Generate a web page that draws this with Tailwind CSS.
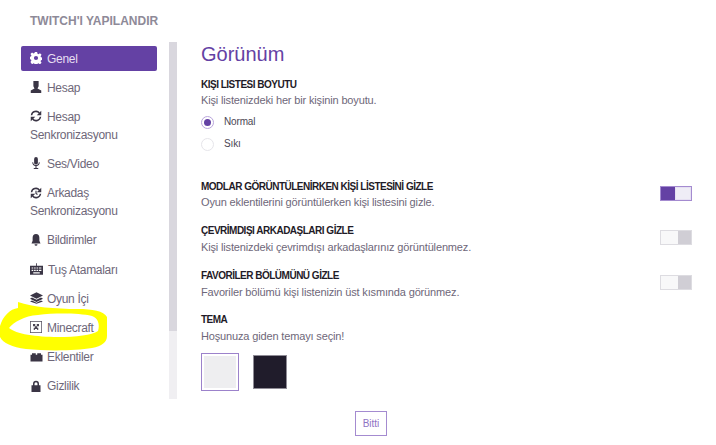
<!DOCTYPE html>
<html lang="tr">
<head>
    <meta charset="UTF-8">
    <title>Twitch'i Yapılandır</title>
    <script src="https://cdn.jsdelivr.net/npm/@tailwindcss/browser@4"></script>
</head>
<body class="bg-white">
    <div class="relative w-[716px] h-[445px] overflow-hidden bg-white font-['Liberation_Sans',Arial,sans-serif] text-[#6e6779]">
        <h1 class="pl-[30px] pt-[15px] h-[42px] text-[12px] leading-[13px] font-bold text-[#8e8a98]">TWITCH'I YAPILANDIR</h1>

        <div class="flex h-[357px]">
            <!-- sidebar -->
            <div class="w-[169px] h-[357px] overflow-hidden pl-[21px] pr-[12px] pt-[4px] tracking-[-0.3px]">
                <a class="block mb-[4.2px] pl-[9px] py-[3.5px] text-[12px] leading-[18px] rounded-[2px] bg-[#6441a4] text-[#e6dff2]">
                    <svg class="inline-block w-[12px] h-[12px] mr-[5px] -mt-[3px] align-middle" viewBox="0 0 16 16" fill="#fff"><path fill-rule="evenodd" d="M6.500 0h3l.5 2.300 1.300.6 2-1.300 2.100 2.100-1.300 2 .6 1.300 2.300.5v3l-2.300.5-.6 1.300 1.300 2-2.100 2.100-2-1.300-1.300.6-.5 2.300h-3l-.5-2.300-1.300-.6-2 1.300L.6 13.300l1.300-2-.6-1.300L-1 9.500V6.500l2.300-.5.6-1.300-1.300-2L2.700.6l2 1.300 1.300-.6zM8 5.200a2.800 2.800 0 1 0 0 5.600 2.800 2.800 0 0 0 0-5.600z"/></svg>Genel
                </a>
                <a class="block mb-[4.2px] pl-[9px] py-[3.5px] text-[12px] leading-[18px]">
                    <svg class="inline-block w-[12px] h-[12px] mr-[5px] -mt-[3px] align-middle" viewBox="0 0 16 16" fill="#3a3545"><path d="M4.500 0h7v7l-1.500 3 5 2.500V16H1v-3.500L6 10 4.500 7z"/></svg>Hesap
                </a>
                <a class="block mb-[4.2px] pl-[9px] py-[3.5px] text-[12px] leading-[18px]">
                    <svg class="inline-block w-[12px] h-[12px] mr-[5px] -mt-[3px] align-middle" viewBox="0 0 16 16" fill="none" stroke="#3a3545" stroke-width="2"><path d="M2 7a6 6 0 0 1 10.500-3M14 9a6 6 0 0 1-10.500 3"/><path fill="#3a3545" stroke="none" d="M15 1v6H9zM1 15V9h6z"/></svg>Hesap Senkronizasyonu
                </a>
                <a class="block mb-[4.2px] pl-[9px] py-[3.5px] text-[12px] leading-[18px]">
                    <svg class="inline-block w-[12px] h-[12px] mr-[5px] -mt-[3px] align-middle" viewBox="0 0 16 16" fill="#3a3545"><rect x="5.500" y="0" width="5" height="10" rx="2.500"/><path d="M3 7h1.200c0 5 7.600 5 7.600 0H13c0 3-2 4.800-4.300 5v2.500H11V16H5v-1.500h2.300V12C5 11.800 3 10 3 7z"/></svg>Ses/Video
                </a>
                <a class="block mb-[4.2px] pl-[9px] py-[3.5px] text-[12px] leading-[18px]">
                    <svg class="inline-block w-[12px] h-[12px] mr-[5px] -mt-[3px] align-middle" viewBox="0 0 16 16" fill="none" stroke="#3a3545" stroke-width="2"><path d="M2 7a6 6 0 0 1 10.500-3M14 9a6 6 0 0 1-10.500 3"/><path fill="#3a3545" stroke="none" d="M15 1v6H9zM1 15V9h6z"/><path stroke-width="1.500" d="M8 5v3.500l2 1.500"/></svg>Arkadaş Senkronizasyonu
                </a>
                <a class="block mb-[4.2px] pl-[9px] py-[3.5px] text-[12px] leading-[18px]">
                    <svg class="inline-block w-[12px] h-[12px] mr-[5px] -mt-[3px] align-middle" viewBox="0 0 16 16" fill="#3a3545"><path d="M8 0c3 0 4.500 2 4.500 5v4l1.500 3.500H2L3.500 9V5C3.500 2 5 0 8 0zM6 13.500h4A2 2 0 0 1 6 13.500z"/></svg>Bildirimler
                </a>
                <a class="block mb-[4.2px] pl-[9px] py-[3.5px] text-[12px] leading-[18px]">
                    <svg class="inline-block w-[13px] h-[12px] mr-[5px] -mt-[3px] align-middle" viewBox="0 0 16 14" fill="#3a3545"><path fill-rule="evenodd" d="M7.500 0h1v3H16v11H0V3h7.500zM2 5v1.500h2V5zm3 0v1.500h2V5zm3 0v1.500h2V5zm3 0v1.500h3V5zM2 8v1.500h2V8zm3 0v1.500h2V8zm3 0v1.500h2V8zm3 0v1.500h3V8zM4 11v1.500h8V11z"/></svg>Tuş Atamaları
                </a>
                <a class="block mb-[4.2px] pl-[9px] py-[3.5px] text-[12px] leading-[18px]">
                    <svg class="inline-block w-[13px] h-[12px] mr-[4px] -mt-[3px] align-middle" viewBox="0 0 16 14" fill="#3a3545"><path d="M8 0l8 4-8 4-8-4zM2.500 6.500L8 9.200l5.500-2.700L16 7.800 8 11.800 0 7.800zM2.500 10L8 12.700 13.500 10 16 11.200 8 14 0 11.200z"/></svg>Oyun İçi
                </a>
                <a class="block mb-[4.2px] pl-[9px] py-[3.5px] text-[12px] leading-[18px]">
                    <svg class="inline-block w-[12px] h-[12px] mr-[5px] -mt-[3px] align-middle" viewBox="0 0 16 16"><rect x=".5" y=".5" width="15" height="15" fill="#fff" stroke="#55505f" stroke-width="1"/><path fill="#4a4553" d="M4 4h3v3H4zM9 4h3v3H9zM6.500 7h3v2H11v3H9.500v-1.500h-3V12H5V9h1.500z"/></svg>Minecraft
                </a>
                <a class="block mb-[4.2px] pl-[9px] py-[3.5px] text-[12px] leading-[18px]">
                    <svg class="inline-block w-[13px] h-[12px] mr-[4px] -mt-[3px] align-middle" viewBox="0 0 16 16" fill="#3a3545"><path d="M2 3h5v2h2V3h5v2h2v9H0V5h2z"/></svg>Eklentiler
                </a>
                <a class="block mb-[4.2px] pl-[9px] py-[3.5px] text-[12px] leading-[18px]">
                    <svg class="inline-block w-[12px] h-[12px] mr-[5px] -mt-[3px] align-middle" viewBox="0 0 16 16" fill="#3a3545"><path fill-rule="evenodd" d="M4 7V5a4 4 0 0 1 8 0v2h2v9H2V7zm2 0h4V5a2 2 0 0 0-4 0z"/></svg>Gizlilik
                </a>
            </div>

            <!-- scrollbar -->
            <div class="w-[8px] h-[357px] bg-[#f0eff2]">
                <div class="h-[289px] bg-[#d9d7de]"></div>
            </div>

            <!-- main -->
            <div class="w-[539px] pl-[24px] text-[11px] leading-[14px] tracking-[-0.15px]">
                <h2 class="h-[36px] text-[20px] leading-[24px] tracking-normal text-[#6441a4]">Görünüm</h2>

                <h3 class="font-bold text-[10px] text-[#1f1b27] tracking-[-0.5px]">KIŞI LISTESI BOYUTU</h3>
                <p class="mt-[1px]">Kişi listenizdeki her bir kişinin boyutu.</p>
                <div class="mt-[8px] flex items-center h-[14px] text-[10px] text-[#4b4654]">
                    <span class="flex items-center justify-center w-[13px] h-[13px] rounded-full border border-[#b9a5dc]"><span class="w-[7px] h-[7px] rounded-full bg-[#6441a4]"></span></span>
                    <span class="ml-[10px]">Normal</span>
                </div>
                <div class="mt-[8px] flex items-center h-[14px] text-[10px] text-[#4b4654]">
                    <span class="w-[13px] h-[13px] rounded-full border border-[#e6e5ea]"></span>
                    <span class="ml-[10px]">Sıkı</span>
                </div>

                <div class="mt-[27px] flex justify-between items-center h-[31px] pr-[24px]">
                    <div class="pt-[2px]">
                        <h3 class="font-bold text-[10px] text-[#1f1b27] tracking-[-0.5px]">MODLAR GÖRÜNTÜLENİRKEN KİŞİ LİSTESİNİ GİZLE</h3>
                        <p class="mt-[1px]">Oyun eklentilerini görüntülerken kişi listesini gizle.</p>
                    </div>
                    <span class="flex w-[32px] h-[15px] border border-[#a48bd0] bg-[#6441a4]"><span class="w-[14px]"></span><span class="flex-1 bg-[#efedf6] border border-[#e6e0f2]"></span></span>
                </div>
                <div class="mt-[13px] flex justify-between items-center h-[31px] pr-[24px]">
                    <div class="pt-[2px]">
                        <h3 class="font-bold text-[10px] text-[#1f1b27] tracking-[-0.5px]">ÇEVRİMDIŞI ARKADAŞLARI GİZLE</h3>
                        <p class="mt-[2px]">Kişi listenizdeki çevrimdışı arkadaşlarınız görüntülenmez.</p>
                    </div>
                    <span class="flex w-[32px] h-[15px] border border-[#dddce1] bg-[#d0ced5]"><span class="w-[17px] bg-[#f8f8f9]"></span></span>
                </div>
                <div class="mt-[14px] flex justify-between items-center h-[31px] pr-[24px]">
                    <div class="pt-[2px]">
                        <h3 class="font-bold text-[10px] text-[#1f1b27] tracking-[-0.5px]">FAVORİLER BÖLÜMÜNÜ GİZLE</h3>
                        <p class="mt-[2px]">Favoriler bölümü kişi listenizin üst kısmında görünmez.</p>
                    </div>
                    <span class="flex w-[32px] h-[15px] border border-[#dddce1] bg-[#d0ced5]"><span class="w-[17px] bg-[#f8f8f9]"></span></span>
                </div>

                <h3 class="mt-[15px] font-bold text-[10px] text-[#1f1b27] tracking-[-0.5px]">TEMA</h3>
                <p class="mt-[2px]">Hoşunuza giden temayı seçin!</p>
                <div class="mt-[10px] flex items-center">
                    <span class="w-[38px] h-[38px] border border-[#9c82cb] bg-[#eeeef0] outline-2 -outline-offset-3 outline-white"></span>
                    <span class="ml-[14px] w-[34px] h-[34px] border border-[#8f8c96] bg-[#201c2b]"></span>
                </div>
            </div>
        </div>

        <div class="flex justify-center pl-[26px] pt-[12px]">
            <button class="w-[32px] h-[25px] border border-[#a48bd0] text-[10px] text-[#8f73c4] font-['Liberation_Sans',sans-serif]">Bitti</button>
        </div>

        <!-- yellow marker scribble, on top of the screenshot -->
        <svg class="absolute left-0 top-0 pointer-events-none" width="716" height="445" viewBox="0 0 716 445">
            <path fill="#ffff00" fill-rule="evenodd" d="M18 302L18 308C10 309 3 316 0 326L0 337C3 343 12 347 26 349C45 351 75 351 92 348C102 346 107 342 107 336L107 317C104 311 92 309 78 309C55 309 33 307 18 302Z M9 328C14 322 24 316 38 315C55 313 78 313 92 316C98 318 100 324 98 331C92 335 76 337 58 337C36 337 16 334 9 328Z"/>
        </svg>
    </div>
</body>
</html>
